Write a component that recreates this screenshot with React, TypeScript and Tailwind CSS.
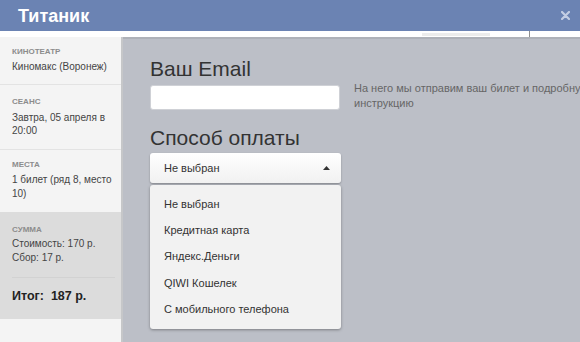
import React from "react";

const items = ["Не выбран", "Кредитная карта", "Яндекс.Деньги", "QIWI Кошелек", "С мобильного телефона"];

export default function App() {
  return (
    <div className="w-[580px] h-[342px] overflow-hidden flex flex-col bg-[#bcbfc7]" style={{ fontFamily: '"Liberation Sans", Arial, sans-serif' }}>
      <div className="h-[31px] shrink-0 bg-[#6b83b3] flex items-center justify-between pl-[18px] pr-[10px]">
        <span className="text-white font-bold text-[18px] leading-none">Титаник</span>
        <svg width="9" height="9" viewBox="0 0 9 9" className="shrink-0">
          <path d="M1 1 L8 8 M8 1 L1 8" stroke="#c3cde3" strokeWidth="2.2" strokeLinecap="round" />
        </svg>
      </div>
      <div className="h-[6px] shrink-0 bg-white flex">
        <div className="ml-[422px] w-[68px] h-[3px] mt-[2px] bg-[#ececec]" />
        <div className="ml-[39px] w-px bg-[#8f8f8f]" />
      </div>
      <div className="flex flex-1 min-h-0">
        <div className="w-[123px] shrink-0 bg-[#f4f4f4] border-r-2 border-[#c6c7c9] flex flex-col">
          <div className="pl-[12px] pr-[6px] pt-[10px] pb-[11px] border-b border-[#e3e3e3]">
            <div className="text-[8px] leading-[10px] font-bold text-[#8c8c8c] uppercase">Кинотеатр</div>
            <div className="mt-[3px] text-[10px] leading-[13px] text-[#444]">Киномакс (Воронеж)</div>
          </div>
          <div className="pl-[12px] pr-[6px] pt-[12px] pb-[12px] border-b border-[#e3e3e3]">
            <div className="text-[8px] leading-[10px] font-bold text-[#8c8c8c] uppercase">Сеанс</div>
            <div className="mt-[4px] text-[10px] leading-[13px] text-[#444]">Завтра, 05 апреля в 20:00</div>
          </div>
          <div className="pl-[12px] pr-[4px] pt-[10px] pb-[11px]">
            <div className="text-[8px] leading-[10px] font-bold text-[#8c8c8c] uppercase">Места</div>
            <div className="mt-[3px] text-[10px] leading-[14px] text-[#444]">1 билет (ряд 8, место 10)</div>
          </div>
          <div className="bg-[#dcdcdc] pl-[12px] pr-[6px] pt-[13px] h-[107px] flex flex-col">
            <div className="text-[8px] leading-[10px] font-bold text-[#8c8c8c] uppercase">Сумма</div>
            <div className="mt-[2px] text-[10px] leading-[14px] text-[#444]">Стоимость: 170 р.</div>
            <div className="text-[10px] leading-[14px] text-[#444]">Сбор: 17 р.</div>
            <div className="mt-[12px] border-t border-[#d2d2d2]" />
            <div className="mt-[10px] text-[12.5px] leading-[16px] font-bold text-[#222]">Итог:&nbsp; 187 р.</div>
          </div>
          <div className="flex-1" />
        </div>
        <div className="flex-1 border-t-2 border-[#aeb1b8] pl-[27px] pt-[18px]">
          <div className="text-[21px] leading-[24px] text-[#333]">Ваш Email</div>
          <div className="flex mt-[4px]">
            <div className="w-[190px] h-[25px] bg-white rounded-[3px] border border-[#cfd1d6] shrink-0" />
            <div className="ml-[14px] -mt-[4px] w-[260px] shrink-0 text-[11px] leading-[15px] text-[#666]">
              На него мы отправим ваш билет и подробную инструкцию
            </div>
          </div>
          <div className="mt-[15px] text-[21px] leading-[24px] text-[#333]">Способ оплаты</div>
          <div className="mt-[3px] w-[191px] h-[30px] rounded-[3px] bg-gradient-to-b from-white to-[#f1f1f1] shadow-[0_1px_2px_rgba(0,0,0,0.3)] flex items-center justify-between pl-[14px] pr-[11px]">
            <span className="text-[11px] text-[#333]">Не выбран</span>
            <svg width="7" height="4" viewBox="0 0 7 4"><path d="M0 4 L3.5 0 L7 4 Z" fill="#333" /></svg>
          </div>
          <div className="mt-[2px] w-[191px] bg-[#f2f2f2] rounded-[3px] shadow-[0_1px_3px_rgba(0,0,0,0.35)] pt-[6px] pb-[7px]">
            {items.map((t) => (
              <div key={t} className="h-[26.25px] flex items-center pl-[14px] text-[11px] text-[#333]">{t}</div>
            ))}
          </div>
        </div>
      </div>
    </div>
  );
}
